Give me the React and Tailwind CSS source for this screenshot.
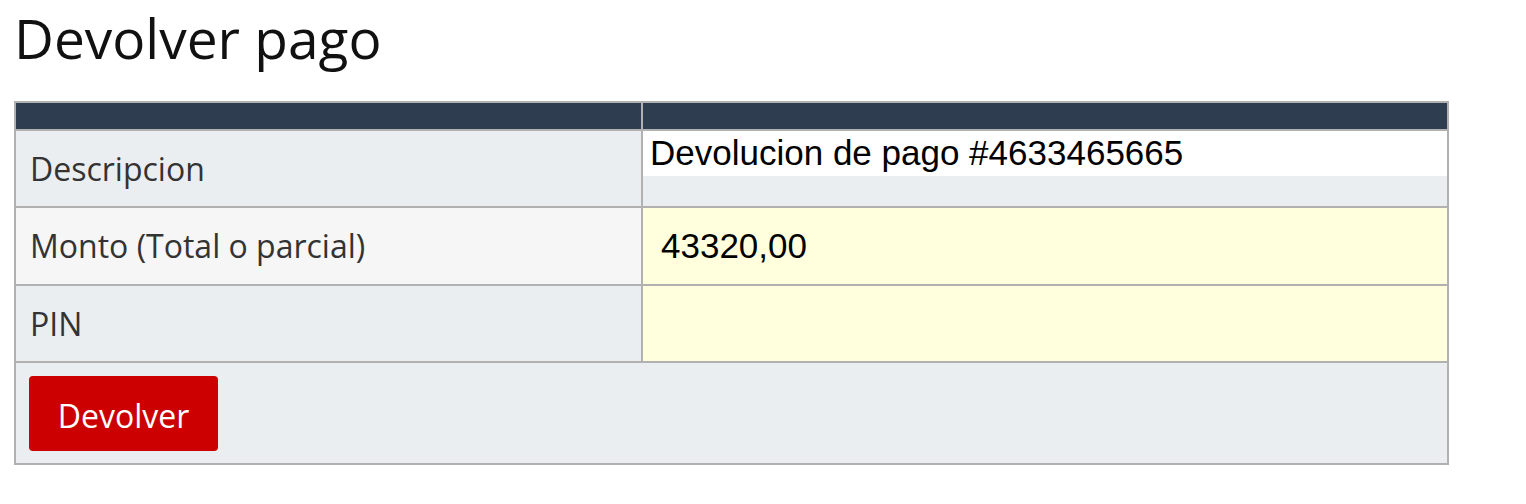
import React from 'react';

const labelCls = "flex items-center pl-[14px] text-[32px] text-[#333333] font-['Open_Sans',sans-serif]";

const App = () => {
    return (
        <div className="min-h-screen bg-white pl-[14px]">
            {/* Title */}
            <h1 className="text-[55px] leading-[75px] text-[#111111] font-['Open_Sans',sans-serif] mb-[26px]">
                Devolver pago
            </h1>

            {/* Form table */}
            <div className="w-[1435px] bg-[#b1b1b1] p-[2px] grid grid-cols-[625px_804px] gap-[2px]">
                {/* Header */}
                <div className="h-[26px] bg-[#2e3e50]"></div>
                <div className="h-[26px] bg-[#2e3e50]"></div>

                {/* Descripcion */}
                <div className={`${labelCls} h-[75px] bg-[#ebeef0]`}>Descripcion</div>
                <div className="h-[75px] bg-[#ebeef0]">
                    <input
                        readOnly
                        defaultValue="Devolucion de pago #4633465665"
                        className="w-full h-[45px] bg-white px-[7px] text-[35px] text-black font-['Liberation_Sans',Arial,sans-serif] outline-none"
                    />
                </div>

                {/* Monto */}
                <div className={`${labelCls} h-[76px] bg-[#f6f6f6]`}>Monto (Total o parcial)</div>
                <div className="h-[76px] bg-[#ffffdd]">
                    <input
                        readOnly
                        defaultValue="43320,00"
                        className="w-full h-full bg-[#ffffdd] pl-[18px] text-[35px] text-black font-['Liberation_Sans',Arial,sans-serif] outline-none"
                    />
                </div>

                {/* PIN */}
                <div className={`${labelCls} h-[75px] bg-[#ebeef0]`}>PIN</div>
                <div className="h-[75px] bg-[#ffffdd]">
                    <input
                        type="password"
                        className="w-full h-full bg-[#ffffdd] pl-[18px] text-[35px] outline-none"
                    />
                </div>

                {/* Actions */}
                <div className="col-span-2 h-[100px] bg-[#ebeef0] pl-[13px] pt-[13px]">
                    <button className="w-[189px] h-[75px] pt-[4px] rounded-[4px] bg-[#cc0000] text-white text-[32px] font-['Open_Sans',sans-serif]">
                        Devolver
                    </button>
                </div>
            </div>
        </div>
    );
};

export default App;
